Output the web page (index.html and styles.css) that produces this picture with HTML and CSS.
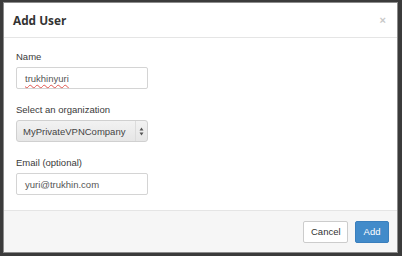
FILE: index.html
```html
<!DOCTYPE html>
<html>
<head>
<meta charset="utf-8">
<link rel="stylesheet" href="styles.css">
</head>
<body>
<div class="frame">
  <div class="modal">
    <div class="modal-header">
      <h4 class="modal-title">Add User</h4>
      <span class="close">×</span>
    </div>
    <div class="modal-body">
      <div class="group">
        <label class="label">Name</label>
        <div class="field"><span class="misspelled">trukhinyuri</span></div>
      </div>
      <div class="group">
        <label class="label">Select an organization</label>
        <div class="select">
          <span class="select-text">MyPrivateVPNCompany</span>
          <span class="select-arrows">
            <svg width="5" height="9" viewBox="0 0 5 9"><path d="M2.5 0.5 L4.5 3.5 L0.5 3.5 Z M2.5 8.5 L4.5 5.5 L0.5 5.5 Z" fill="#555"/></svg>
          </span>
        </div>
      </div>
      <div class="group">
        <label class="label">Email (optional)</label>
        <div class="field">yuri@trukhin.com</div>
      </div>
    </div>
    <div class="modal-footer">
      <button class="btn btn-default">Cancel</button>
      <button class="btn btn-primary">Add</button>
    </div>
  </div>
</div>
</body>
</html>
```
FILE: styles.css
```css
* { box-sizing: border-box; }
html, body { margin: 0; padding: 0; }
body {
  width: 402px;
  height: 256px;
  background: #3b3b3b;
  font-family: "Liberation Sans", Arial, sans-serif;
  overflow: hidden;
}
.frame {
  width: 402px;
  height: 256px;
  padding: 2px 4px 3px 3px;
}
.modal {
  height: 100%;
  background: #fff;
  border: 1px solid #8c8c8c;
  display: flex;
  flex-direction: column;
}
.modal-header {
  height: 37px;
  padding: 0 10px 0 9px;
  border-bottom: 1px solid #e5e5e5;
  display: flex;
  align-items: center;
  justify-content: space-between;
}
.modal-title {
  margin: 0;
  font-family: "Open Sans", sans-serif;
  font-weight: 700;
  font-size: 11.8px;
  color: #333;
}
.close {
  font-size: 11px;
  color: #c8c8c8;
  font-weight: 700;
  line-height: 1;
  margin-right: 1px;
}
.modal-body {
  padding: 13px 12px 0 12px;
  flex: 1;
}
.group { margin-bottom: 15px; }
.label {
  display: block;
  font-size: 9.5px;
  line-height: 12px;
  color: #3a3a3a;
  margin-bottom: 4px;
}
.field {
  width: 132px;
  height: 22px;
  border: 1px solid #d4d4d4;
  border-radius: 2px;
  background: #fff;
  font-size: 9.5px;
  color: #555;
  padding: 0 8px;
  display: flex;
  align-items: center;
}
.misspelled {
  text-decoration: underline wavy #e0564f;
  text-decoration-thickness: 1px;
  text-underline-offset: 2px;
}
.select {
  width: 132px;
  height: 22px;
  border: 1px solid #d0d0d0;
  border-radius: 3px;
  background: linear-gradient(#f2f2f2, #e6e6e6);
  display: flex;
  align-items: center;
  font-size: 9.5px;
  color: #444;
}
.select-text {
  flex: 1;
  padding-left: 6px;
}
.select-arrows {
  width: 12px;
  height: 100%;
  border-left: 1px solid #dcdcdc;
  display: flex;
  align-items: center;
  justify-content: center;
}
.modal-footer {
  height: 44px;
  border-top: 1px solid #e5e5e5;
  background: #f6f6f6;
  display: flex;
  align-items: center;
  justify-content: flex-end;
  gap: 7px;
  padding-right: 8px;
}
.btn {
  height: 22px;
  border-radius: 2px;
  font-family: "Liberation Sans", Arial, sans-serif;
  font-size: 9.5px;
  padding: 0 7px;
  margin: 0;
}
.btn-default {
  width: 45px;
  background: #fff;
  border: 1px solid #ccc;
  color: #333;
}
.btn-primary {
  width: 34px;
  background: #428bca;
  border: 1px solid #3a7fbd;
  color: #fff;
}
```
